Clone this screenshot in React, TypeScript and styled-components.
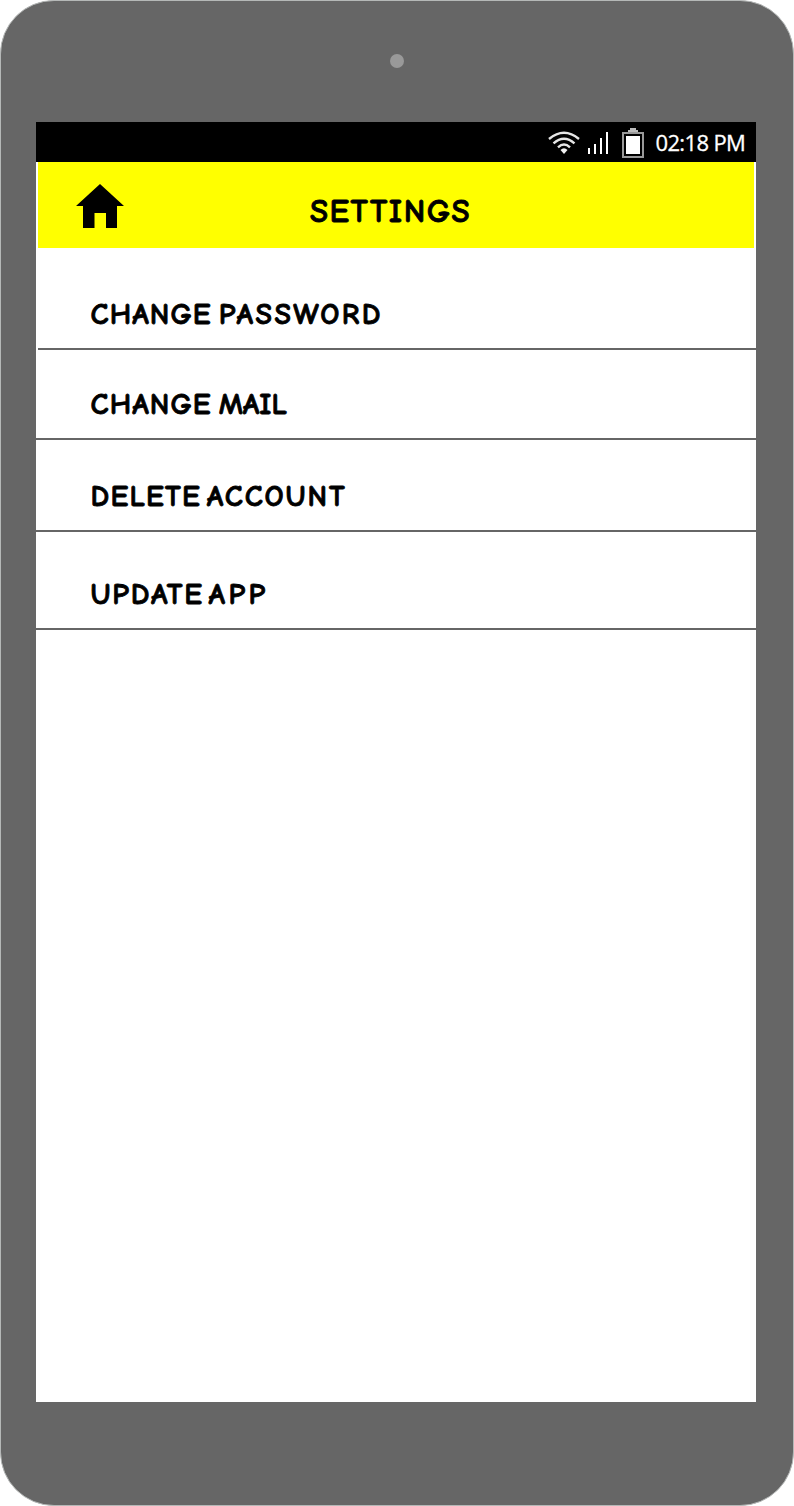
import React from "react";
import styled, { createGlobalStyle } from "styled-components";

const GlobalStyle = createGlobalStyle`
  * { box-sizing: border-box; }
  body { margin: 0; background: #fff; }
`;

const Device = styled.main`
  width: 794px;
  height: 1506px;
  padding: 0 37px 0 35px;
  border: 1px solid #b5b8b7;
  border-radius: 54px;
  background: #666;
`;

const Bezel = styled.div`
  height: 121px;
  display: flex;
  justify-content: center;
  padding: 53px 0 0 2px;
`;

const Camera = styled.span`
  width: 14px;
  height: 14px;
  border-radius: 50%;
  background: #999;
`;

const Screen = styled.section`
  width: 720px;
  height: 1280px;
  background: #fff;
`;

const StatusBar = styled.div`
  height: 40px;
  display: flex;
  justify-content: flex-end;
  padding-right: 10px;
  background: #000;
`;

const StatusIcons = styled.svg`
  width: 100px;
  height: 40px;
  display: block;
`;

const Clock = styled.time`
  width: 98px;
  padding-left: 7.5px;
  color: #fff;
  font: 400 22px/40px "Open Sans", sans-serif;
  letter-spacing: -0.65px;
  white-space: nowrap;
  -webkit-text-stroke: 0.3px #fff;
`;

const Header = styled.header`
  height: 86px;
  margin: 0 2px;
  padding-left: 38px;
  display: flex;
  align-items: flex-start;
  background: #ff0;
`;

const HomeButton = styled.button`
  width: 48px;
  height: 44px;
  margin: 22px 0 0;
  padding: 0;
  border: 0;
  background: none;
`;

const HomeGlyph = styled.svg`
  display: block;
`;

const handwriting = `"Comic Neue", Lato, sans-serif`;

const Title = styled.h1`
  margin: 26px 0 0 186px;
  font: 700 33px/46px ${handwriting};
  letter-spacing: 1.5px;
  white-space: nowrap;
  -webkit-text-stroke: 0.8px #000;
`;

const Menu = styled.ul`
  margin: 0;
  padding: 0;
  list-style: none;
`;

const Item = styled.li<{ $height: number; $inset?: number }>`
  height: ${(p) => p.$height}px;
  margin-left: ${(p) => p.$inset ?? 0}px;
  padding: 0 0 13px ${(p) => 54.5 - (p.$inset ?? 0)}px;
  display: flex;
  align-items: flex-end;
  border-bottom: 2px solid #666;
`;

const Label = styled.span<{ $gap: number }>`
  font: 700 30px/40px ${handwriting};
  word-spacing: ${(p) => p.$gap}px;
  white-space: nowrap;
  -webkit-text-stroke: 0.8px #000;
`;

const Word = styled.span<{ $spacing: number }>`
  letter-spacing: ${(p) => p.$spacing}px;
`;

const items = [
  { first: "CHANGE", second: "PASSWORD", height: 102, inset: 2, tracking: [1.1, 2.5], gap: -3.7 },
  { first: "CHANGE", second: "MAIL", height: 90, tracking: [1.1, 0], gap: -3.7 },
  { first: "DELETE", second: "ACCOUNT", height: 92, tracking: [1.2, 1.9], gap: -4.7 },
  { first: "UPDATE", second: "APP", height: 98, tracking: [1.8, 3.5], gap: -6.2 },
];

export default function App() {
  return (
    <>
      <GlobalStyle />
      <Device>
        <Bezel>
          <Camera />
        </Bezel>
        <Screen>
          <StatusBar>
            <StatusIcons viewBox="0 0 100 40" aria-hidden="true">
              <g fill="none" stroke="#e6e6e6" strokeWidth="2.4">
                <path d="M1 17 Q16 4.5 31 17" />
                <path d="M5.5 21.3 Q16 12 26.5 21.3" />
                <path d="M10 25.3 Q16 19.5 22 25.3" />
              </g>
              <path d="M12.5 28 Q16 24.5 19.5 28 L16 32Z" fill="#f2f2f2" />
              <path d="M40 26h2v6h-2zM46 22h2v10h-2zM52 16h2v16h-2zM58 10h2v22h-2z" fill="#fff" />
              <rect x="75" y="11" width="20" height="24" fill="none" stroke="#999" strokeWidth="2" />
              <path d="M82 6h6v2h2v2H80V8h2z" fill="#bbb" />
              <path d="M78 14h14v18H78z" fill="#fff" />
            </StatusIcons>
            <Clock>02:18 PM</Clock>
          </StatusBar>
          <Header>
            <HomeButton aria-label="Home">
              <HomeGlyph width="48" height="44" viewBox="0 0 48 44">
                <path d="M24 0 48 22H41V44H30V29H18.5V44H7V22H0Z" />
              </HomeGlyph>
            </HomeButton>
            <Title>SETTINGS</Title>
          </Header>
          <Menu>
            {items.map((item) => (
              <Item key={item.first + item.second} $height={item.height} $inset={item.inset}>
                <Label $gap={item.gap}>
                  <Word $spacing={item.tracking[0]}>{item.first}</Word>{" "}
                  <Word $spacing={item.tracking[1]}>{item.second}</Word>
                </Label>
              </Item>
            ))}
          </Menu>
        </Screen>
      </Device>
    </>
  );
}
